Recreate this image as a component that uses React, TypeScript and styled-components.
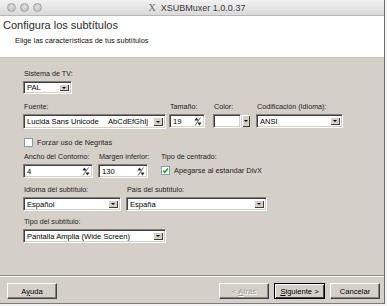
import styled, { createGlobalStyle } from 'styled-components'

const GlobalStyle = createGlobalStyle`
  html, body {
    margin: 0;
    padding: 0;
    background: #f4f4f4;
  }
  body {
    font-family: "Liberation Sans", Arial, sans-serif;
  }
`

const Window = styled.div`
  width: 384px;
  height: 303px;
  display: flex;
  flex-direction: column;
  background: #d4d0c8;
  border-right: 1px solid #6e6e6e;
  border-bottom: 1px solid #7a7a7a;
  overflow: hidden;
`

const TitleBar = styled.div`
  height: 16px;
  flex: none;
  position: relative;
  display: flex;
  align-items: center;
  justify-content: center;
  background: linear-gradient(#f2f2f2, #d9d9d9);
  border-bottom: 1px solid #b8b8b8;
  box-sizing: border-box;
`

const Lights = styled.div`
  position: absolute;
  left: 7px;
  top: 3px;
  display: flex;
  gap: 4px;
`

const Light = styled.span`
  width: 9px;
  height: 9px;
  border-radius: 50%;
  background: radial-gradient(circle at 50% 40%, #e2e2e2, #b9b9b9);
  border: 1px solid #a2a2a2;
  box-sizing: border-box;
`

const TitleText = styled.div`
  display: flex;
  align-items: center;
  gap: 5px;
  font-size: 9px;
  color: #3a3a3a;
  margin-left: 10px;
`

const XGlyph = styled.span`
  font-family: "Liberation Serif", "Times New Roman", serif;
  font-size: 10px;
  color: #6a6a6a;
`

const Header = styled.div`
  height: 42px;
  flex: none;
  background: #fff;
  padding: 3px 0 0 3px;
  box-sizing: border-box;
  border-bottom: 1px solid #c8c5bd;
`

const Heading = styled.div`
  font-size: 11px;
  line-height: 13px;
  color: #2a2a2a;
`

const SubHeading = styled.div`
  font-size: 7.4px;
  line-height: 9px;
  color: #111;
  margin: 4px 0 0 12px;
`

const Content = styled.div`
  flex: 1;
  padding: 11px 0 0 23px;
  display: flex;
  flex-direction: column;
`

const Row = styled.div<{ $top: number }>`
  display: flex;
  align-items: flex-start;
  margin-top: ${(p) => p.$top}px;
`

const Field = styled.div<{ $w?: number }>`
  display: flex;
  flex-direction: column;
  gap: 2px;
  flex: none;
  width: ${(p) => (p.$w ? `${p.$w}px` : 'auto')};
`

const Label = styled.div`
  font-size: 7.2px;
  line-height: 10px;
  color: #222;
  padding-left: 1px;
  white-space: nowrap;
`

const Sunken = styled.div<{ $w: number; $h: number }>`
  width: ${(p) => p.$w}px;
  height: ${(p) => p.$h}px;
  box-sizing: border-box;
  display: flex;
  align-items: center;
  background: #fff;
  border-top: 1px solid #808080;
  border-left: 1px solid #808080;
  border-bottom: 1px solid #fff;
  border-right: 1px solid #fff;
  box-shadow: inset 1px 1px 0 #404040, inset -1px -1px 0 #d4d0c8;
  padding: 0 2px 0 3px;
  font-size: 7.6px;
  color: #000;
  white-space: nowrap;
`

const ValueText = styled.span`
  flex: 1;
  overflow: hidden;
`

const Sample = styled.span`
  margin-right: 5px;
`

const DropButton = styled.span`
  width: 10px;
  align-self: stretch;
  margin: 2px 0;
  flex: none;
  display: flex;
  align-items: center;
  justify-content: center;
  background: #d4d0c8;
  box-shadow: inset 1px 1px 0 #fff, inset -1px -1px 0 #404040;
  &::after {
    content: '';
    border-left: 2px solid transparent;
    border-right: 2px solid transparent;
    border-top: 2px solid #000;
  }
`

const SpinIcon = () => (
  <svg width="8" height="9" viewBox="0 0 8 9">
    <path d="M0.5 3.5 L2.5 0.5 L4.5 3.5 Z" fill="#222" />
    <path d="M3.5 5.5 L5.5 8.5 L7.5 5.5 Z" fill="#222" />
    <path d="M6.5 0.5 L1 8.5" stroke="#555" strokeWidth="0.9" />
  </svg>
)

const ColorGroup = styled.div`
  display: flex;
  align-items: stretch;
  gap: 1px;
  height: 14px;
`

const Swatch = styled(Sunken)`
  padding: 0;
`

const SmallButton = styled(DropButton)`
  margin: 1px 0;
  width: 8px;
`

const CheckRow = styled.label`
  display: flex;
  align-items: center;
  gap: 4px;
  font-size: 7.4px;
  color: #222;
  white-space: nowrap;
  height: 13px;
  padding-left: 1px;
`

const CheckBox = styled.span`
  width: 9px;
  height: 9px;
  box-sizing: border-box;
  background: #fff;
  border: 1px solid #7f9db9;
  display: flex;
  align-items: center;
  justify-content: center;
`

const Footer = styled.div`
  height: 28px;
  flex: none;
  box-sizing: border-box;
  border-top: 1px solid #8c8a85;
  box-shadow: inset 0 1px 0 #fff;
  display: flex;
  align-items: flex-start;
  padding: 7px 4px 0 7px;
`

const Button = styled.button<{ $default?: boolean }>`
  height: 16px;
  width: ${(p) => (p.$default ? 51 : 50)}px;
  box-sizing: border-box;
  padding: 0;
  font-family: inherit;
  font-size: 7.6px;
  color: ${(p) => (p.disabled ? '#a09d96' : '#000')};
  text-shadow: ${(p) => (p.disabled ? '1px 1px 0 #fff' : 'none')};
  background: #d4d0c8;
  border: 1px solid ${(p) => (p.$default ? '#000' : '#fff')};
  border-right-color: ${(p) => (p.$default ? '#000' : '#404040')};
  border-bottom-color: ${(p) => (p.$default ? '#000' : '#404040')};
  box-shadow: ${(p) =>
    p.$default
      ? 'inset 1px 1px 0 #fff, inset -1px -1px 0 #404040'
      : 'inset -1px -1px 0 #808080'};
`

const Spacer = styled.div`
  flex: 1;
`

const ButtonGroup = styled.div`
  display: flex;
  gap: 5px;
`

const Under = styled.span`
  text-decoration: underline;
`

function Select({ w, h = 14, value, sample }: { w: number; h?: number; value: string; sample?: string }) {
  return (
    <Sunken $w={w} $h={h}>
      <ValueText>{value}</ValueText>
      {sample && <Sample>{sample}</Sample>}
      <DropButton />
    </Sunken>
  )
}

function Spinner({ w, value }: { w: number; value: string }) {
  return (
    <Sunken $w={w} $h={14}>
      <ValueText>{value}</ValueText>
      <SpinIcon />
    </Sunken>
  )
}

export default function App() {
  return (
    <>
      <GlobalStyle />
      <Window>
        <TitleBar>
          <Lights>
            <Light />
            <Light />
            <Light />
          </Lights>
          <TitleText>
            <XGlyph>X</XGlyph>
            XSUBMuxer 1.0.0.37
          </TitleText>
        </TitleBar>
        <Header>
          <Heading>Configura los subtítulos</Heading>
          <SubHeading>Elige las características de tus subtítulos</SubHeading>
        </Header>
        <Content>
          <Row $top={0}>
            <Field>
              <Label>Sistema de TV:</Label>
              <Select w={49} h={13} value="PAL" />
            </Field>
          </Row>
          <Row $top={8}>
            <Field $w={146}>
              <Label>Fuente:</Label>
              <Select w={143} h={15} value="Lucida Sans Unicode" sample="AbCdEfGhIj" />
            </Field>
            <Field $w={44}>
              <Label>Tamaño:</Label>
              <Spinner w={36} value="19" />
            </Field>
            <Field $w={43}>
              <Label>Color:</Label>
              <ColorGroup>
                <Swatch $w={28} $h={14} />
                <SmallButton />
              </ColorGroup>
            </Field>
            <Field>
              <Label>Codificación (Idioma):</Label>
              <Select w={87} value="ANSI" />
            </Field>
          </Row>
          <Row $top={7}>
            <CheckRow>
              <CheckBox />
              Forzar uso de Negritas
            </CheckRow>
          </Row>
          <Row $top={3}>
            <Field $w={75}>
              <Label>Ancho del Contorno:</Label>
              <Spinner w={70} value="4" />
            </Field>
            <Field $w={62}>
              <Label>Margen inferior:</Label>
              <Spinner w={50} value="130" />
            </Field>
            <Field>
              <Label>Tipo de centrado:</Label>
              <CheckRow>
                <CheckBox>
                  <svg width="7" height="7" viewBox="0 0 7 7">
                    <path d="M1 3.5 L2.8 5.3 L6 1.5" fill="none" stroke="#21a121" strokeWidth="1.6" />
                  </svg>
                </CheckBox>
                Apegarse al estandar DivX
              </CheckRow>
            </Field>
          </Row>
          <Row $top={7}>
            <Field $w={103}>
              <Label>Idioma del subtítulo:</Label>
              <Select w={98} value="Español" />
            </Field>
            <Field>
              <Label>País del subtítulo:</Label>
              <Select w={141} value="España" />
            </Field>
          </Row>
          <Row $top={6}>
            <Field>
              <Label>Tipo del subtítulo:</Label>
              <Select w={143} value="Pantalla Amplia (Wide Screen)" />
            </Field>
          </Row>
        </Content>
        <Footer>
          <Button>
            A<Under>y</Under>uda
          </Button>
          <Spacer />
          <ButtonGroup>
            <Button disabled>
              &lt; <Under>A</Under>trás
            </Button>
            <Button $default>
              <Under>S</Under>iguiente &gt;
            </Button>
            <Button>Cancelar</Button>
          </ButtonGroup>
        </Footer>
      </Window>
    </>
  )
}
